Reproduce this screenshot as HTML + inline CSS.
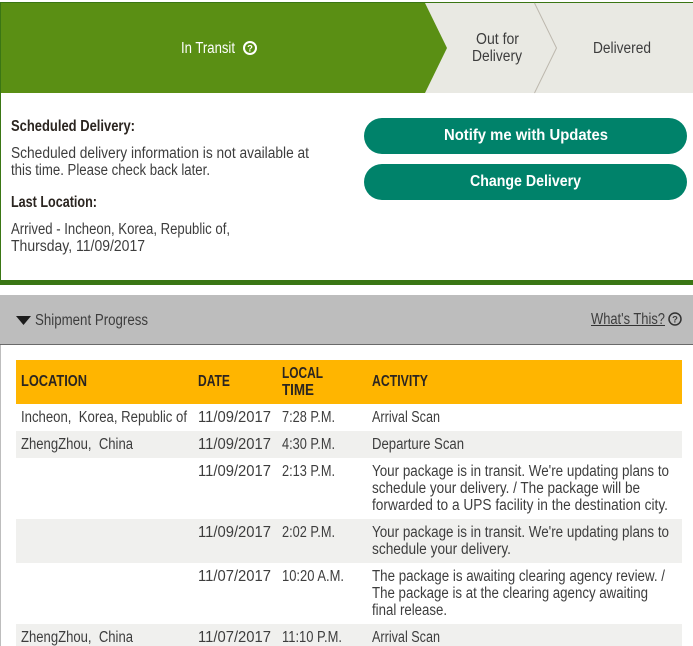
<!DOCTYPE html>
<html><head><meta charset="utf-8"><title>Shipment Progress</title>
<style>
html,body{margin:0;padding:0;background:#fff;width:693px;height:646px;overflow:hidden}
svg{display:block}
text{font-family:"Liberation Sans",sans-serif;font-size:15.5px;fill:#3d3d3d;white-space:pre}
.b{font-weight:bold;fill:#2b2520;font-size:15.5px}
.w{fill:#fff}
</style></head><body>
<svg width="693" height="646" viewBox="0 0 693 646" xmlns="http://www.w3.org/2000/svg">
<rect width="693" height="646" fill="#fff"/>
<!-- progress -->
<rect x="0" y="3" width="693" height="90" fill="#e9e9e3"/>
<polygon points="0,3 425,3 447,48 425,93 0,93" fill="#5a8f14"/>
<rect x="0" y="2" width="693" height="1" fill="#3a7614"/>
<path d="M534.5 3L556.5 48L534.5 93" fill="none" stroke="#bdb8ae" stroke-width="1"/>
<text class="w" x="181" y="53" textLength="54" lengthAdjust="spacingAndGlyphs">In Transit</text>
<circle cx="250" cy="48" r="6" fill="none" stroke="#fff" stroke-width="2"/>
<text x="250" y="51.5" text-anchor="middle" class="w" style="font-size:9.5px;font-weight:bold">?</text>
<text x="476" y="44" textLength="43" lengthAdjust="spacingAndGlyphs">Out for</text>
<text x="472" y="61" textLength="50" lengthAdjust="spacingAndGlyphs">Delivery</text>
<text x="593" y="53" textLength="58" lengthAdjust="spacingAndGlyphs">Delivered</text>
<!-- summary -->
<rect x="0" y="2" width="1" height="283" fill="#3a7614"/>
<rect x="0" y="280" width="693" height="5" fill="#3a7614"/>
<text class="b" x="11" y="131" textLength="124" lengthAdjust="spacingAndGlyphs">Scheduled Delivery:</text>
<text x="11" y="158" textLength="298" lengthAdjust="spacingAndGlyphs">Scheduled delivery information is not available at</text>
<text x="11" y="175" textLength="199" lengthAdjust="spacingAndGlyphs">this time. Please check back later.</text>
<text class="b" x="11" y="207" textLength="86" lengthAdjust="spacingAndGlyphs">Last Location:</text>
<text x="11" y="234" textLength="219" lengthAdjust="spacingAndGlyphs">Arrived - Incheon, Korea, Republic of,</text>
<text x="11" y="251" textLength="134" lengthAdjust="spacingAndGlyphs">Thursday, 11/09/2017</text>
<rect x="364" y="118" width="323" height="36" rx="18" fill="#00826a"/>
<rect x="364" y="164" width="323" height="36" rx="18" fill="#00826a"/>
<text class="b w" style="fill:#fff;font-size:16px" x="444" y="140" textLength="164" lengthAdjust="spacingAndGlyphs">Notify me with Updates</text>
<text class="b w" style="fill:#fff;font-size:16px" x="470" y="186" textLength="111" lengthAdjust="spacingAndGlyphs">Change Delivery</text>
<!-- shipment bar -->
<rect x="0" y="295" width="693" height="49" fill="#bdbdbd"/>
<rect x="0" y="344" width="693" height="1" fill="#6a6a6a"/>
<rect x="0" y="345" width="1" height="301" fill="#bdbdbd"/>
<polygon points="16,316 31,316 23.5,325" fill="#1c1c1c"/>
<text x="35" y="325" textLength="113" lengthAdjust="spacingAndGlyphs">Shipment Progress</text>
<text x="591" y="324" textLength="74" lengthAdjust="spacingAndGlyphs">What's This?</text>
<rect x="591" y="325" width="74" height="1" fill="#333"/>
<circle cx="675" cy="319" r="6" fill="none" stroke="#333" stroke-width="1.5"/>
<text x="675" y="322.5" text-anchor="middle" style="font-size:9.5px;font-weight:bold">?</text>
<!-- table -->
<rect x="16" y="360" width="666" height="44" fill="#ffb500"/>
<rect x="16" y="431" width="666" height="27" fill="#f0f0ee"/>
<rect x="16" y="519" width="666" height="44" fill="#f0f0ee"/>
<rect x="16" y="624" width="666" height="22" fill="#f0f0ee"/>
<text class="b" x="21" y="386" textLength="66" lengthAdjust="spacingAndGlyphs">LOCATION</text>
<text class="b" x="198" y="386" textLength="32" lengthAdjust="spacingAndGlyphs">DATE</text>
<text class="b" x="282" y="378" textLength="41" lengthAdjust="spacingAndGlyphs">LOCAL</text>
<text class="b" x="282" y="395" textLength="32" lengthAdjust="spacingAndGlyphs">TIME</text>
<text class="b" x="372" y="386" textLength="56" lengthAdjust="spacingAndGlyphs">ACTIVITY</text>

<text x="21" y="422" textLength="166" lengthAdjust="spacingAndGlyphs">Incheon,  Korea, Republic of</text>
<text x="198" y="422" textLength="73" lengthAdjust="spacingAndGlyphs">11/09/2017</text>
<text x="282" y="422" textLength="53" lengthAdjust="spacingAndGlyphs">7:28 P.M.</text>
<text x="372" y="422" textLength="68" lengthAdjust="spacingAndGlyphs">Arrival Scan</text>

<text x="21" y="449" textLength="112" lengthAdjust="spacingAndGlyphs">ZhengZhou,  China</text>
<text x="198" y="449" textLength="73" lengthAdjust="spacingAndGlyphs">11/09/2017</text>
<text x="282" y="449" textLength="53" lengthAdjust="spacingAndGlyphs">4:30 P.M.</text>
<text x="372" y="449" textLength="92" lengthAdjust="spacingAndGlyphs">Departure Scan</text>

<text x="198" y="476" textLength="73" lengthAdjust="spacingAndGlyphs">11/09/2017</text>
<text x="282" y="476" textLength="53" lengthAdjust="spacingAndGlyphs">2:13 P.M.</text>
<text x="372" y="476" textLength="297" lengthAdjust="spacingAndGlyphs">Your package is in transit. We're updating plans to</text>
<text x="372" y="493" textLength="268" lengthAdjust="spacingAndGlyphs">schedule your delivery. / The package will be</text>
<text x="372" y="510" textLength="296" lengthAdjust="spacingAndGlyphs">forwarded to a UPS facility in the destination city.</text>

<text x="198" y="537" textLength="73" lengthAdjust="spacingAndGlyphs">11/09/2017</text>
<text x="282" y="537" textLength="53" lengthAdjust="spacingAndGlyphs">2:02 P.M.</text>
<text x="372" y="537" textLength="297" lengthAdjust="spacingAndGlyphs">Your package is in transit. We're updating plans to</text>
<text x="372" y="554" textLength="139" lengthAdjust="spacingAndGlyphs">schedule your delivery.</text>

<text x="198" y="581" textLength="73" lengthAdjust="spacingAndGlyphs">11/07/2017</text>
<text x="282" y="581" textLength="62" lengthAdjust="spacingAndGlyphs">10:20 A.M.</text>
<text x="372" y="581" textLength="293" lengthAdjust="spacingAndGlyphs">The package is awaiting clearing agency review. /</text>
<text x="372" y="598" textLength="276" lengthAdjust="spacingAndGlyphs">The package is at the clearing agency awaiting</text>
<text x="372" y="615" textLength="75" lengthAdjust="spacingAndGlyphs">final release.</text>

<text x="21" y="642" textLength="112" lengthAdjust="spacingAndGlyphs">ZhengZhou,  China</text>
<text x="198" y="642" textLength="73" lengthAdjust="spacingAndGlyphs">11/07/2017</text>
<text x="282" y="642" textLength="60" lengthAdjust="spacingAndGlyphs">11:10 P.M.</text>
<text x="372" y="642" textLength="68" lengthAdjust="spacingAndGlyphs">Arrival Scan</text>
</svg>
</body></html>
